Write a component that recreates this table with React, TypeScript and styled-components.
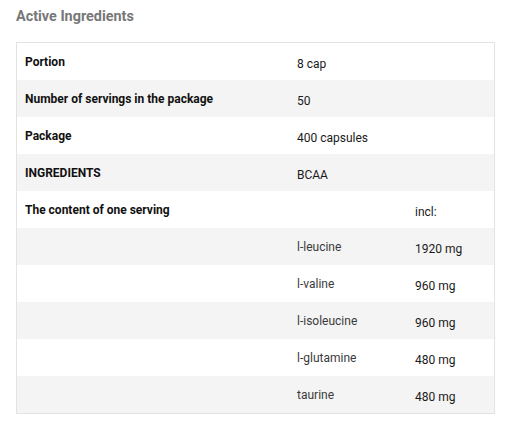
import React from "react";
import styled, { createGlobalStyle } from "styled-components";

const Global = createGlobalStyle`
  html, body { margin: 0; padding: 0; background: #fff; }
  body { font-family: Roboto, "Liberation Sans", Arial, sans-serif; }
`;

const Page = styled.div`
  padding: 8px 10px 0 16px;
  width: 479px;
`;

const Title = styled.h2`
  margin: 0 0 16px 0;
  font-size: 14.4px;
  line-height: 18px;
  font-weight: 700;
  color: #777;
`;

const Table = styled.div`
  border: 1px solid #e3e3e3;
  box-shadow: 0 1px 1px rgba(0, 0, 0, 0.04);
`;

const Row = styled.div<{ $alt?: boolean }>`
  display: grid;
  grid-template-columns: 272px 118px 1fr;
  height: 37px;
  background: ${(p) => (p.$alt ? "#f4f4f4" : "#fff")};
`;

const Label = styled.div`
  padding: 12px 8px 0 8px;
  font-size: 12px;
  line-height: 14px;
  font-weight: 700;
  color: #111;
`;

const Value = styled.div<{ $span?: boolean }>`
  padding: 14px 8px 0 8px;
  font-size: 12px;
  line-height: 14px;
  color: #1a1a1a;
  grid-column: ${(p) => (p.$span ? "span 2" : "auto")};
`;

const Name = styled.div`
  padding: 12px 8px 0 8px;
  font-size: 12px;
  line-height: 14px;
  color: #3a3a3a;
`;

const topRows = [
  ["Portion", "8 cap"],
  ["Number of servings in the package", "50"],
  ["Package", "400 capsules"],
  ["INGREDIENTS", "BCAA"],
];

const subRows = [
  ["l-leucine", "1920 mg"],
  ["l-valine", "960 mg"],
  ["l-isoleucine", "960 mg"],
  ["l-glutamine", "480 mg"],
  ["taurine", "480 mg"],
];

export default function App() {
  return (
    <>
      <Global />
      <Page>
        <Title>Active Ingredients</Title>
        <Table>
          {topRows.map(([l, v], i) => (
            <Row key={l} $alt={i % 2 === 1}>
              <Label>{l}</Label>
              <Value $span>{v}</Value>
            </Row>
          ))}
          <Row>
            <Label>The content of one serving</Label>
            <div />
            <Value>incl:</Value>
          </Row>
          {subRows.map(([n, v], i) => (
            <Row key={n} $alt={i % 2 === 0}>
              <div />
              <Name>{n}</Name>
              <Value>{v}</Value>
            </Row>
          ))}
        </Table>
      </Page>
    </>
  );
}
